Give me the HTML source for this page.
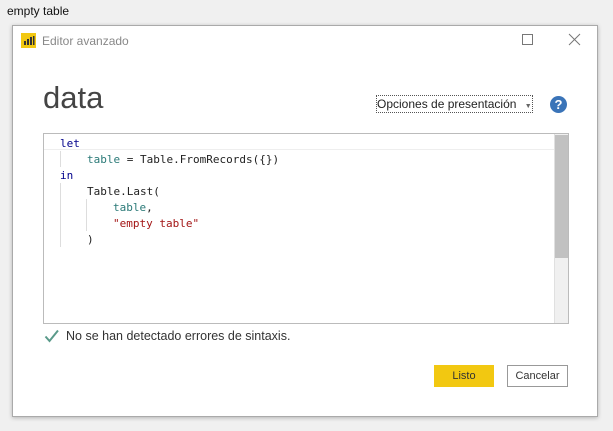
<!DOCTYPE html>
<html><head><style>
*{margin:0;padding:0;box-sizing:border-box}
body{width:613px;height:431px;background:#f0f0f0;font-family:"Liberation Sans",sans-serif;position:relative;overflow:hidden}
.a{position:absolute;white-space:nowrap}
.code{font-family:"DejaVu Sans Mono","Liberation Mono",monospace;font-size:11px;color:#222}
</style></head><body>
<div class="a" style="left:7px;top:4px;font-size:12px;color:#111">empty table</div>
<div class="a" style="left:12px;top:25px;width:586px;height:392px;background:#fff;border:1px solid #aaa;box-shadow:0 1px 4px rgba(0,0,0,.25)"></div>
<div class="a" style="left:21px;top:33px;width:15px;height:15px;background:#f2c811"></div>
<svg class="a" style="left:21px;top:33px" width="15" height="15"><g fill="#333"><rect x="3" y="8" width="2" height="4"/><rect x="6" y="6" width="2" height="6"/><rect x="9" y="4" width="2" height="8"/><rect x="12" y="3" width="1.5" height="9"/></g></svg>
<div class="a" style="left:42px;top:34px;font-size:12px;color:#888">Editor avanzado</div>
<div class="a" style="left:522px;top:34px;width:11px;height:11px;border:1px solid #777"></div>
<svg class="a" style="left:568px;top:33px" width="13" height="13"><path d="M1 1L12 12M12 1L1 12" stroke="#777" stroke-width="1"/></svg>
<div class="a" style="left:43px;top:80px;font-size:31px;color:#444">data</div>
<div class="a" style="left:376px;top:95px;width:157px;height:18px;border:1px dotted #555;font-size:12px;color:#222;padding:1px 0 0 0;line-height:15px">Opciones de presentación <span style="font-size:7px;color:#666;margin-left:5px">▼</span></div>
<div class="a" style="left:550px;top:96px;width:17px;height:17px;border-radius:50%;background:#3a74b8;color:#fff;font-size:13px;font-weight:bold;text-align:center;line-height:17px">?</div>
<div class="a" style="left:43px;top:133px;width:526px;height:191px;border:1px solid #bbb"></div>
<div class="a" style="left:554px;top:134px;width:14px;height:189px;background:#f0f0f0;border-left:1px solid #e0e0e0"></div>
<div class="a" style="left:555px;top:135px;width:13px;height:123px;background:#c1c1c1"></div>
<div class="a" style="left:44px;top:134px;width:510px;height:16px;background:#fff;border-bottom:1px solid #eee"></div>
<div class="a" style="left:60px;top:151px;width:1px;height:16px;background:#ddd"></div>
<div class="a" style="left:60px;top:183px;width:1px;height:64px;background:#ddd"></div>
<div class="a" style="left:86px;top:199px;width:1px;height:32px;background:#ddd"></div>
<div class="a code" style="left:60px;top:137px;color:#00008b">let</div>
<div class="a code" style="left:87px;top:153px"><span style="color:#2b7a78">table</span> = Table.FromRecords({})</div>
<div class="a code" style="left:60px;top:169px;color:#00008b">in</div>
<div class="a code" style="left:87px;top:185px">Table.Last(</div>
<div class="a code" style="left:113px;top:201px;color:#2b7a78">table<span style="color:#222">,</span></div>
<div class="a code" style="left:113px;top:217px;color:#a31515">"empty table"</div>
<div class="a code" style="left:87px;top:233px">)</div>
<svg class="a" style="left:44px;top:329px" width="16" height="14"><path d="M1.5 7.5L5.5 12L14 1.5" stroke="#5a9a8a" stroke-width="2" fill="none"/></svg>
<div class="a" style="left:66px;top:329px;font-size:12.5px;color:#333">No se han detectado errores de sintaxis.</div>
<div class="a" style="left:434px;top:365px;width:60px;height:22px;background:#f2c811;font-size:11px;color:#333;text-align:center;line-height:22px">Listo</div>
<div class="a" style="left:507px;top:365px;width:61px;height:22px;border:1px solid #999;background:#fff;font-size:11px;color:#333;text-align:center;line-height:20px">Cancelar</div>
</body></html>
